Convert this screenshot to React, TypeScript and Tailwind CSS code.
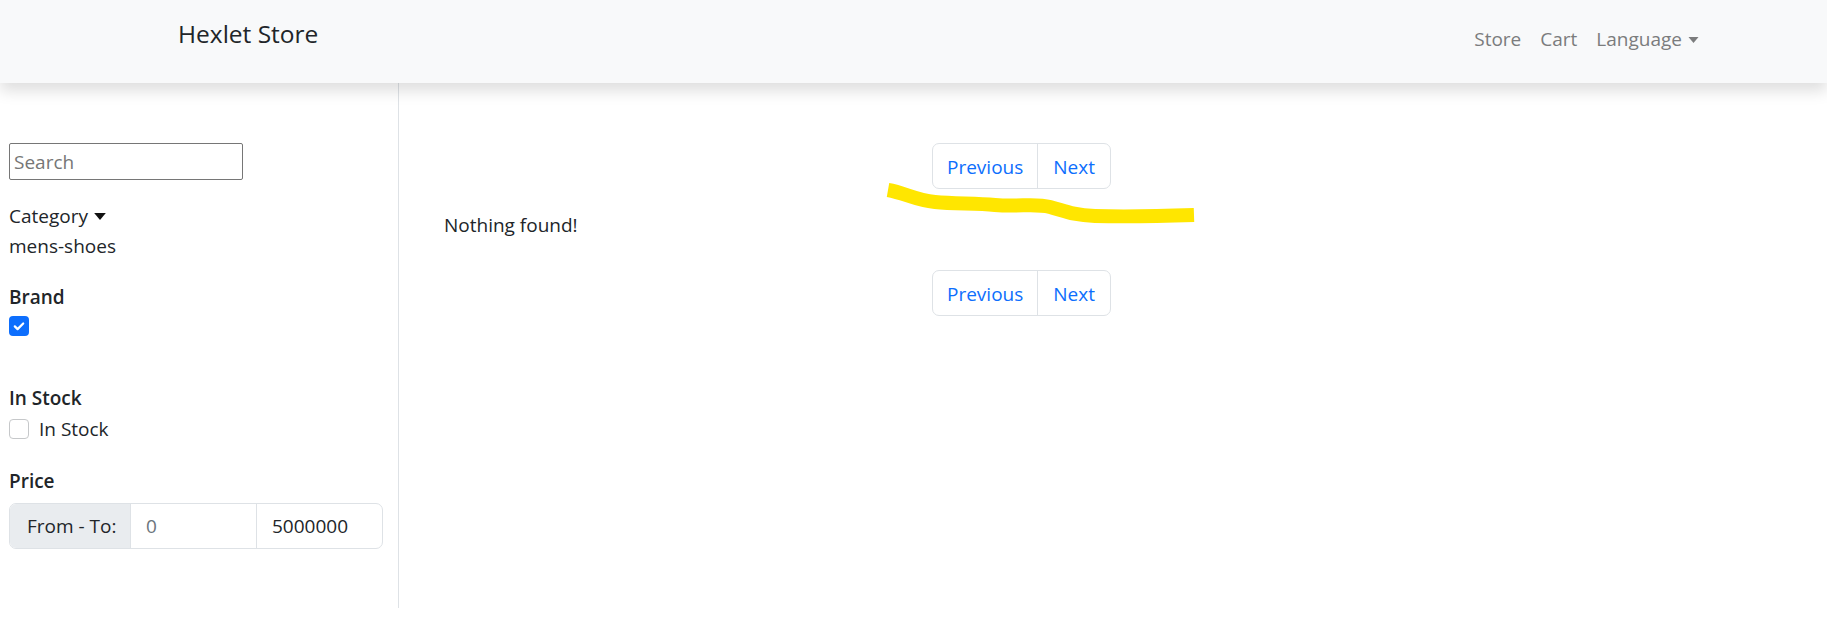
const font = { fontFamily: '"Open Sans", "Liberation Sans", sans-serif' };

function Caret({ className }: { className?: string }) {
  return (
    <svg viewBox="0 0 10 6" className={className} fill="currentColor">
      <path d="M0 0h10L5 6z" />
    </svg>
  );
}

function Pagination() {
  return (
    <div className="flex justify-center">
      <ul className="flex h-[46px] border border-[#dee2e6] rounded-[7px] text-[#0d6efd]">
        <li className="flex items-center pt-[2px] px-[14px] border-r border-[#dee2e6]">Previous</li>
        <li className="flex items-center pt-[2px] px-[15px]">Next</li>
      </ul>
    </div>
  );
}

export default function App() {
  return (
    <div className="relative w-[1827px] h-[641px] bg-white text-[#212529] text-[19px] overflow-hidden" style={font}>
      <nav className="relative z-10 flex items-center justify-between h-[83px] bg-[#f8f9fa] pl-[178px] pr-[128px] shadow-[0_8px_14px_rgba(0,0,0,0.13)]">
        <span className="text-[24.5px] -mt-[14px]">Hexlet Store</span>
        <ul className="flex items-center gap-[19px] text-[#7b7c7d] -mt-[4px]">
          <li>Store</li>
          <li>Cart</li>
          <li className="flex items-center gap-[6px]">
            Language
            <Caret className="w-[11px] h-[6px]" />
          </li>
        </ul>
      </nav>

      <div className="flex">
        <aside className="w-[399px] h-[525px] border-r border-[#dee2e6] pl-[9px] pt-[60px]">
          <input
            className="w-[234px] h-[37px] border border-[#767676] rounded-[2px] px-[4px] placeholder:text-[#767676] outline-none"
            placeholder="Search"
          />
          <div className="mt-[21px] flex items-center gap-[6px] leading-[30px]">
            Category
            <Caret className="w-[12px] h-[7px] text-[#111]" />
          </div>
          <div className="leading-[30px]">mens-shoes</div>

          <div className="mt-[21px] font-semibold leading-[30px]">Brand</div>
          <div className="mt-[4px] w-[20px] h-[20px] rounded-[4px] bg-[#0d6efd] flex items-center justify-center">
            <svg viewBox="0 0 20 20" className="w-[14px] h-[14px]" fill="none" stroke="white" strokeWidth="3.2" strokeLinecap="round" strokeLinejoin="round">
              <path d="M4 10.5l4 4 8-8" />
            </svg>
          </div>

          <div className="mt-[47px] font-semibold leading-[30px]">In Stock</div>
          <label className="flex items-center gap-[10px] leading-[30px] mt-[1px]">
            <span className="w-[20px] h-[20px] rounded-[4px] border border-[#c6c8ca] bg-white" />
            In Stock
          </label>

          <div className="mt-[22px] font-semibold leading-[30px]">Price</div>
          <div className="mt-[7px] flex w-[374px] h-[46px] border border-[#dee2e6] rounded-[7px] overflow-hidden">
            <span className="w-[121px] flex items-center pl-[17px] bg-[#e9ecef] border-r border-[#dee2e6]">From - To:</span>
            <span className="w-[126px] flex items-center pl-[15px] text-[#6c757d] border-r border-[#dee2e6]">0</span>
            <span className="flex-1 flex items-center pl-[15px]">5000000</span>
          </div>
        </aside>

        <main className="w-[1200px] pl-[45px] pt-[60px]">
          <Pagination />
          <p className="mt-[21px] leading-[30px]">Nothing found!</p>
          <div className="mt-[30px]">
            <Pagination />
          </div>
        </main>
      </div>

      <svg className="absolute left-0 top-0 pointer-events-none z-20" width="1827" height="641">
        <path
          d="M888 190 C905 193 915 200 935 202 C955 204 975 203 995 205 C1020 207 1035 203 1050 207 C1065 211 1072 215 1095 216 C1130 217 1165 216 1194 215"
          fill="none"
          stroke="#ffe600"
          strokeWidth="14"
        />
      </svg>
    </div>
  );
}
